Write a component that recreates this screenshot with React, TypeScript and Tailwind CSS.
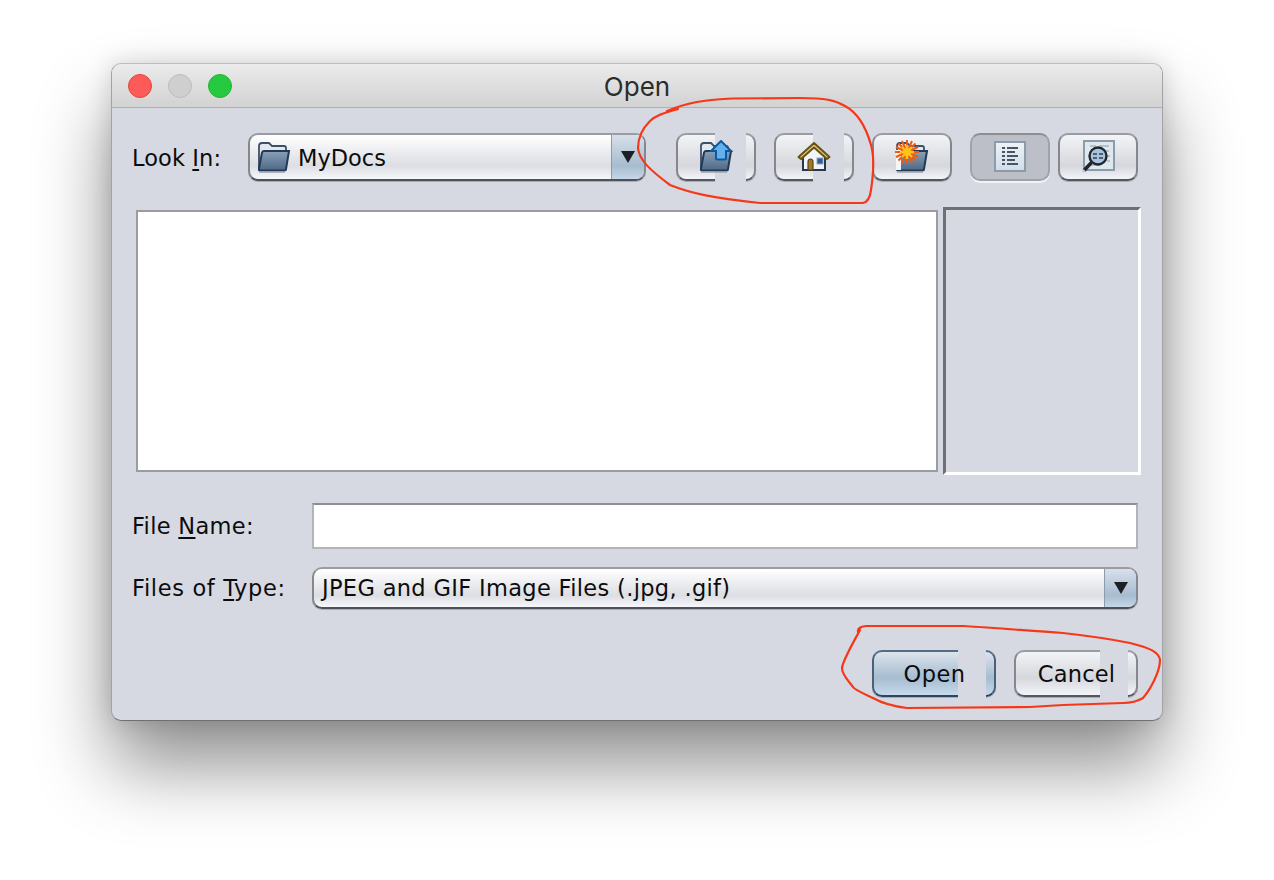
import React from "react";

const btn =
  "relative flex items-center justify-center w-[80px] h-[48px] rounded-[10px] border-2 border-t-[#9a9ca2] border-x-[#85878d] border-b-[#55585f] bg-gradient-to-b from-[#f3f4f7] via-[#d5d7dc] via-70% to-[#f3f5fb] shadow-[0_1px_0_#a9acb3]";

function FolderBack({ id }: { id: string }) {
  return (
    <>
      <defs>
        <linearGradient id={id} x1="0" y1="0" x2="0" y2="1">
          <stop offset="0" stopColor="#8aa0b8" />
          <stop offset="1" stopColor="#4d6886" />
        </linearGradient>
      </defs>
      <path d="M2 29V6q0-3 3-3h7l3 3h12q2 0 2 2v3" fill="#e3e8ee" stroke="#3c5069" strokeWidth="1.800" />
      <path d="M7 11h25l-3 18q0 1.500-2 1.500H3q-1.500 0-1-2l3-16q.5-1.500 2-1.500z" fill={`url(#${id})`} stroke="#223a55" strokeWidth="2" />
      <path d="M2 32h26" stroke="#9aa3b0" strokeWidth="1.500" />
    </>
  );
}

function UpIcon() {
  return (
    <svg width="34" height="34" viewBox="0 0 34 34" className="relative">
      <FolderBack id="fup" />
      <path d="M22 1l10 10h-5v7q0 1.500-1.500 1.500h-7Q17 19.500 17 18v-7h-5z" fill="#62b2ec" stroke="#0e5aa2" strokeWidth="2" />
    </svg>
  );
}

function HomeIcon() {
  return (
    <svg width="34" height="34" viewBox="0 0 34 34" className="relative">
      <path d="M6 15v15h22V15L17 6z" fill="#f1f4f8" stroke="#26384f" strokeWidth="2" />
      <path d="M1.500 17L17 3l15.500 14-2.500 2L17 7.500 4 19z" fill="#d9c47e" stroke="#6a5312" strokeWidth="2" strokeLinejoin="round" />
      <path d="M11 30v-8q0-3 2.500-3t2.500 3v8z" fill="#a07a28" stroke="#5c4713" strokeWidth="1.200" />
      <rect x="20" y="18" width="6" height="6" fill="#2e5f94" stroke="#8ea6c0" />
    </svg>
  );
}

function NewFolderIcon() {
  return (
    <svg width="34" height="34" viewBox="0 0 34 34" className="relative">
      <FolderBack id="fnew" />
      <rect x="1" y="10" width="5" height="20" fill="#f4f5f8" />
      <path
        d="M0 12H24M12 0V24M3.500 3.500L20.500 20.500M20.500 3.500L3.500 20.500M1 7L23 17M1 17L23 7M7 1L17 23M17 1L7 23"
        stroke="#ef5a10"
        strokeWidth="2"
      />
      <path d="M5 12H19M12 5V19M7 7L17 17M17 7L7 17" stroke="#ffc21a" strokeWidth="2.400" />
      <circle cx="12" cy="12" r="4" fill="#ffc21a" />
    </svg>
  );
}

function DocLines() {
  return (
    <>
      <defs>
        <linearGradient id="docg" x1="0" y1="0" x2="0" y2="1">
          <stop offset="0" stopColor="#eef3f8" />
          <stop offset="1" stopColor="#cfdce8" />
        </linearGradient>
      </defs>
      <rect x="1" y="1" width="30" height="29" fill="url(#docg)" stroke="#8d9aa8" strokeWidth="2" />
    </>
  );
}

function ListIcon() {
  return (
    <svg width="32" height="32" viewBox="0 0 32 32">
      <DocLines />
      {[7, 11, 15, 19, 23].map((y) => (
        <g key={y} stroke="#4a5563" strokeWidth="2">
          <path d={`M8 ${y}h3`} />
          <path d={`M13 ${y}h${y === 7 || y === 15 || y === 23 ? 11 : 8}`} />
        </g>
      ))}
    </svg>
  );
}

function DetailsIcon() {
  return (
    <svg width="34" height="34" viewBox="0 0 34 34">
      <rect x="3" y="1" width="30" height="29" fill="#dfe7ef" stroke="#8d9aa8" strokeWidth="2" />
      <path d="M9 6h6m3 0h10M22 11h6M26 16h3M26 21h3M9 25h10" stroke="#aab4bf" strokeWidth="1.500" />
      <circle cx="17" cy="16" r="8.500" fill="#a9c3da" stroke="#20262e" strokeWidth="2.400" />
      <path d="M12 14h4m2 0h4M12 18h4m2 0h4" stroke="#4e5f72" strokeWidth="2" />
      <path d="M10.500 22.500L3 30.500" stroke="#20262e" strokeWidth="3.600" />
      <path d="M3.500 30L1.500 32" stroke="#c9ccd0" strokeWidth="2" />
    </svg>
  );
}

function Caret() {
  return (
    <svg width="14" height="12" viewBox="0 0 14 12">
      <path d="M0 0h14L7 12z" fill="#1c1f24" />
    </svg>
  );
}

function Patch({ className }: { className: string }) {
  return <span className={`absolute top-[-2px] bottom-[-3px] bg-[#d6d9e1] ${className}`} />;
}

const font = "font-['DejaVu_Sans',sans-serif] text-[22.500px] text-[#0c0c0c]";
const combo =
  "flex rounded-[10px] border-2 border-t-[#9a9ca2] border-x-[#85878d] border-b-[#4e5159] bg-gradient-to-b from-white via-[#dcdee3] via-70% to-[#f7f8fc] shadow-[0_1px_0_#a9acb3] overflow-hidden";
const arrow =
  "flex items-center justify-center border-l border-[#8a9cae] bg-gradient-to-b from-[#d7e0ea] via-[#a7bccf] via-70% to-[#c5d8e9]";

export default function App() {
  return (
    <div className="relative min-h-[880px] bg-white pt-[63px] pl-[111px] overflow-hidden">
      <div className={`w-[1052px] h-[658px] rounded-[10px] bg-[#d6d9e1] border border-t-[#bdbdbd] border-x-[#a2a3a7] border-b-[#6f7074] shadow-[0_45px_75px_rgba(0,0,0,0.44),0_0_25px_rgba(0,0,0,0.15)] overflow-hidden ${font}`}>
        <div className="relative flex items-center h-[44px] pl-[16px] gap-[16px] bg-gradient-to-b from-[#ebebeb] to-[#d2d2d2] border-b border-[#b0b0b0]">
          <span className="w-[24px] h-[24px] rounded-full bg-[#fc5b57] border border-[#e5453f]" />
          <span className="w-[24px] h-[24px] rounded-full bg-[#cfcfcf] border border-[#bcbcbc]" />
          <span className="w-[24px] h-[24px] rounded-full bg-[#27c941] border border-[#1fb636]" />
          <div className="absolute inset-0 flex items-center justify-center pt-[2px] font-['Inter',sans-serif] text-[26px] text-[#2c2c2c]">
            Open
          </div>
        </div>

        <div className="pl-[20px] pr-[21px]">
          <div className="flex items-center h-[48px] mt-[25px]">
            <div className="w-[116px] whitespace-nowrap pt-[3px] tracking-[0.1px]">
              Look <u className="underline-offset-[3px]">I</u>n:
            </div>
            <div className={`${combo} w-[398px] h-[48px]`}>
              <div className="flex items-center flex-1 pl-[7px] gap-[7px]">
                <svg width="34" height="34" viewBox="0 0 34 34">
                  <FolderBack id="fcombo" />
                </svg>
                <span className="pt-[3px]">MyDocs</span>
              </div>
              <div className={`${arrow} w-[33px]`}>
                <Caret />
              </div>
            </div>
            <div className="flex ml-[30px] gap-[18px]">
              <div className={btn}>
                <Patch className="left-[37px] w-[31px]" />
                <UpIcon />
              </div>
              <div className={btn}>
                <Patch className="left-[37px] w-[31px]" />
                <HomeIcon />
              </div>
              <div className={btn}>
                <NewFolderIcon />
              </div>
            </div>
            <div className="flex ml-[18px] gap-[8px]">
              <div className="flex items-center justify-center w-[80px] h-[48px] rounded-[10px] border-2 border-t-[#8c8e94] border-x-[#a0a2a8] border-b-[#a0a2a8] bg-[#bcbfc7] shadow-[0_2px_0_#f2f3f6]">
                <ListIcon />
              </div>
              <div className={btn}>
                <DetailsIcon />
              </div>
            </div>
          </div>

          <div className="flex items-start mt-[26px] ml-[4px]">
            <div className="w-[802px] h-[262px] mt-[3px] bg-white border-2 border-[#9b9ca0]" />
            <div className="w-[198px] h-[268px] ml-[5px] bg-[#d6d9e1] border-[3px] border-t-[#6f7074] border-l-[#6f7074] border-r-white border-b-white" />
          </div>

          <div className="flex items-center mt-[28px] h-[46px]">
            <div className="w-[180px] whitespace-nowrap pt-[1px] tracking-[0.3px]">
              File <u className="underline-offset-[3px]">N</u>ame:
            </div>
            <div className="w-[826px] h-[46px] bg-white border-2 border-t-[#8e8f93] border-x-[#b3b4b7] border-b-[#b3b4b7]" />
          </div>

          <div className="flex items-center mt-[18px] h-[42px]">
            <div className="w-[180px] whitespace-nowrap pt-[2px] tracking-[0.65px]">
              Files of <u className="underline-offset-[3px]">T</u>ype:
            </div>
            <div className={`${combo} w-[826px] h-[42px]`}>
              <div className="flex items-center flex-1 pl-[8px] pt-[2px] tracking-[0.33px]">JPEG and GIF Image Files (.jpg, .gif)</div>
              <div className={`${arrow} w-[32px]`}>
                <Caret />
              </div>
            </div>
          </div>

          <div className="flex justify-end gap-[18px] mt-[41px] pr-[3px]">
            <div className="relative flex items-center justify-center w-[124px] h-[47px] rounded-[10px] border-2 border-t-[#566c84] border-x-[#4a6078] border-b-[#2d4560] bg-gradient-to-b from-[#dde4ec] via-[#a6bcd0] via-60% to-[#c6daec] shadow-[0_1px_0_#a9acb3]">
              <Patch className="left-[84px] w-[28px]" />
              <span className="relative pt-[2px] pl-[1px] tracking-[0.5px]">Open</span>
            </div>
            <div className="relative flex items-center justify-center w-[124px] h-[47px] rounded-[10px] border-2 border-t-[#9a9ca2] border-x-[#85878d] border-b-[#55585f] bg-gradient-to-b from-[#f3f4f7] via-[#d5d7dc] via-60% to-[#f3f5fb] shadow-[0_1px_0_#a9acb3]">
              <Patch className="left-[84px] w-[28px]" />
              <span className="relative pt-[2px] pl-[1px] tracking-[0.2px]">Cancel</span>
            </div>
          </div>
        </div>
      </div>

      <svg width="1274" height="880" viewBox="0 0 1274 880" fill="none" className="absolute inset-0 pointer-events-none">
        <path
          d="M678 109C668 112 657 114 650 121C642 129 638 138 638 148C639 160 650 170 670 185C690 193 712 198 760 203L863 203C868 202 870 198 871 190C874 170 874 155 871 145C866 127 858 113 845 106C835 100 825 98 800 98L733 98.500C712 99 690 101 667 111"
          stroke="#f6381a"
          strokeWidth="2.200"
          strokeLinecap="round"
        />
        <path
          d="M858 632Q857 627 866 626L963 626C1000 628 1030 631 1063 633C1090 636 1115 640 1130 643C1150 648 1159 652 1160 660C1160 672 1150 690 1143 698C1138 701 1130 703 1123 703L1063 705L1030 707L907 708C890 706 880 702 873 698C860 692 855 690 853 687C848 680 842 675 842 668C843 660 852 645 860 630"
          stroke="#f6381a"
          strokeWidth="2.200"
          strokeLinecap="round"
        />
      </svg>
    </div>
  );
}
